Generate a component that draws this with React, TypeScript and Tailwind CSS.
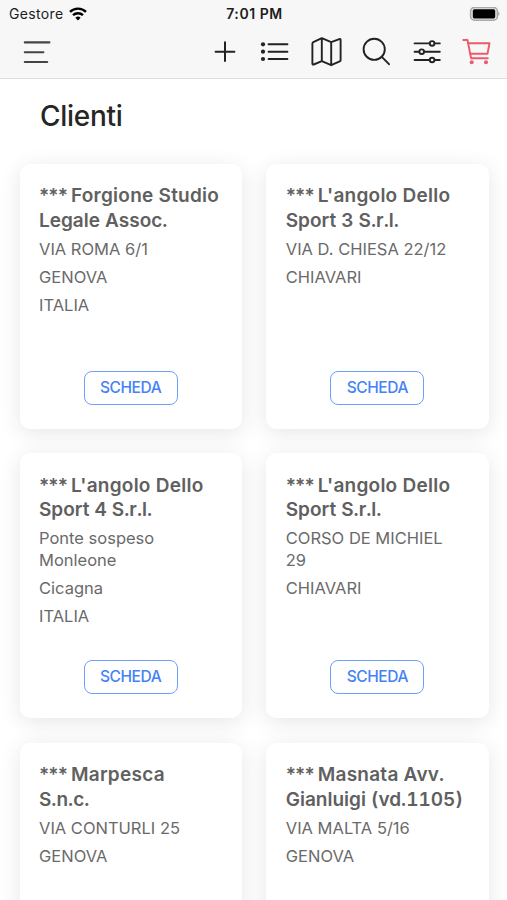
type Client = {
  id: number;
  name: string[];
  lines: string[];
};

const clients: Client[] = [
  { id: 1, name: ["Forgione Studio", "Legale Assoc."], lines: ["VIA ROMA 6/1", "GENOVA", "ITALIA"] },
  { id: 2, name: ["L'angolo Dello", "Sport 3 S.r.l."], lines: ["VIA D. CHIESA 22/12", "CHIAVARI"] },
  { id: 3, name: ["L'angolo Dello", "Sport 4 S.r.l."], lines: ["Ponte sospeso Monleone", "Cicagna", "ITALIA"] },
  { id: 4, name: ["L'angolo Dello", "Sport S.r.l."], lines: ["CORSO DE MICHIEL 29", "CHIAVARI"] },
  { id: 5, name: ["Marpesca", "S.n.c."], lines: ["VIA CONTURLI 25", "GENOVA"] },
  { id: 6, name: ["Masnata Avv.", "Gianluigi (vd.1105)"], lines: ["VIA MALTA 5/16", "GENOVA"] },
];

const StatusBar = () => {
  return (
    <div className="flex h-[27px] items-center justify-between pl-[9px] pr-[7px] text-[#1c1c1c]">
      <div className="flex w-[180px] items-center gap-[5px]">
        <span className="text-[14px] tracking-[0.35px]">Gestore</span>
        <svg className="h-[14px] w-[18px]" viewBox="0 0 18 14" fill="none" stroke="#000" strokeWidth="2.4">
          <path d="M1 4.9a11.4 11.4 0 0 1 16 0" />
          <path d="M4 8.2a7.2 7.2 0 0 1 10 0" />
          <path d="M9 13.4 6.4 10.7a3.8 3.8 0 0 1 5.2 0Z" fill="#000" stroke="none" />
        </svg>
      </div>
      <span className="text-[14px] font-semibold tracking-[0.55px]">7:01 PM</span>
      <div className="flex w-[180px] justify-end">
        <svg className="h-[14px] w-[31px]" viewBox="0 0 31 14">
          <rect x="1.6" y="0.4" width="26.8" height="12.8" rx="3.8" fill="#e4e4e4" stroke="#a9a9a9" strokeWidth="1.5" />
          <rect x="3.8" y="2.2" width="22.4" height="9.2" rx="1.6" fill="#000" />
          <path d="M29.2 4.6v4.4c1.8-.8 1.8-3.6 0-4.4Z" fill="#a9a9a9" />
        </svg>
      </div>
    </div>
  );
};

const Toolbar = () => {
  return (
    <div className="flex h-[51px] items-center justify-between pb-px pl-5 pr-[14px] text-[#222]">
      <svg className="size-8" viewBox="0 0 32 32" fill="none" stroke="#444" strokeWidth="2.1" strokeLinecap="round">
        <path d="M4.8 6.4h24.6M4.8 16.2h18.6M4.8 26h22.4" />
      </svg>
      <div className="flex gap-[18.4px]">
        <svg className="size-8" viewBox="0 0 32 32" fill="none" stroke="currentColor" strokeWidth="2" strokeLinecap="round">
          <path d="M6.6 15.7h18.8M16 6.3v18.8" />
        </svg>
        <svg className="size-8" viewBox="0 0 32 32" fill="none" stroke="currentColor" strokeWidth="2" strokeLinecap="round">
          <path d="M9.6 8.3h18.8M9.6 15.7h18.8M9.6 23h18.8" />
          <g fill="currentColor" stroke="none">
            <circle cx="4" cy="8.3" r="2.1" />
            <circle cx="4" cy="15.7" r="2.1" />
            <circle cx="4" cy="23" r="2.1" />
          </g>
        </svg>
        <svg className="size-8" viewBox="0 0 32 32" fill="none" stroke="currentColor" strokeWidth="1.9" strokeLinejoin="round">
          <path d="M11.8 2.2 3.3 6.1q-.9.4-.9 1.4v20q0 1.5 1.3 1L11.8 25.1l9.4 4.1 8.5-3.8q.9-.4.9-1.4V4.1q0-1.5-1.3-1L21.2 6.1ZM11.8 2.2v22.9M21.2 6.1v23.1" />
        </svg>
        <svg className="size-8" viewBox="0 0 32 32" fill="none" stroke="currentColor" strokeWidth="1.9" strokeLinecap="round">
          <circle cx="14.2" cy="13.3" r="10.6" />
          <path d="m21.8 20.9 7.2 7.3" />
        </svg>
        <svg className="size-8" viewBox="0 0 32 32" fill="none" stroke="currentColor" strokeWidth="1.9" strokeLinecap="round">
          <path d="M3.6 7.4h25.2M3.6 15.7h25.2M3.6 24h25.2" />
          <g fill="#f7f7f7">
            <circle cx="21.1" cy="7.4" r="2.3" />
            <circle cx="10.7" cy="15.7" r="2.3" />
            <circle cx="21.1" cy="24" r="2.3" />
          </g>
        </svg>
        <svg className="size-8" viewBox="0 0 32 32" fill="none" stroke="#eb5a6d" strokeWidth="1.9" strokeLinecap="round" strokeLinejoin="round">
          <path d="M2.3 4h4.2l3.6 18.2h16.7" />
          <path d="M7 7.2h21.5l-2 10.6H9.2" />
          <g fill="#eb5a6d" stroke="none">
            <circle cx="10.7" cy="26.3" r="2" />
            <circle cx="25" cy="26.3" r="2" />
          </g>
        </svg>
      </div>
    </div>
  );
};

const ClientCard = ({ client }: { client: Client }) => {
  return (
    <div className="flex h-[265px] flex-col rounded-[10px] bg-white px-[19.5px] pb-[24px] pt-[20.5px] shadow-[0_4px_22px_rgba(0,0,0,0.1)]">
      <h2 className="whitespace-nowrap text-[19px] font-semibold leading-[24.5px] text-[#606060]">
        <span className="tracking-[-0.9px]">*** </span>
        <span className="tracking-[0.25px]">{client.name[0]}</span>
        <br />
        <span className="tabular-nums">{client.name[1]}</span>
      </h2>
      <div className="mt-[4.5px] flex flex-col gap-[6px] pr-2 text-[16.5px] leading-[22px] text-[#6a6a6a]">
        {client.lines.map((line) => (
          <p key={line}>{line}</p>
        ))}
      </div>
      <button className="mt-auto h-[34px] w-[94px] self-center rounded-[8px] border-[1.5px] border-[#6ea0fa] text-[15.5px] font-medium tracking-[-0.4px] text-[#4482f6]">
        SCHEDA
      </button>
    </div>
  );
};

const App = () => {
  return (
    <div className="h-[900px] overflow-hidden bg-white font-['Inter','Liberation_Sans',sans-serif]">
      <header className="h-[79px] border-b border-[#dedede] bg-[#f7f7f7]">
        <StatusBar />
        <Toolbar />
      </header>
      <main className="pl-[19.5px] pr-[18.5px]">
        <h1 className="pl-[20.5px] pt-[19px] text-[28px] font-medium leading-[36px] tracking-[-0.3px] text-[#262626]">
          Clienti
        </h1>
        <div className="mt-[29.5px] grid grid-cols-2 gap-[24.5px]">
          {clients.map((client) => (
            <ClientCard key={client.id} client={client} />
          ))}
        </div>
      </main>
    </div>
  );
};

export default App;
